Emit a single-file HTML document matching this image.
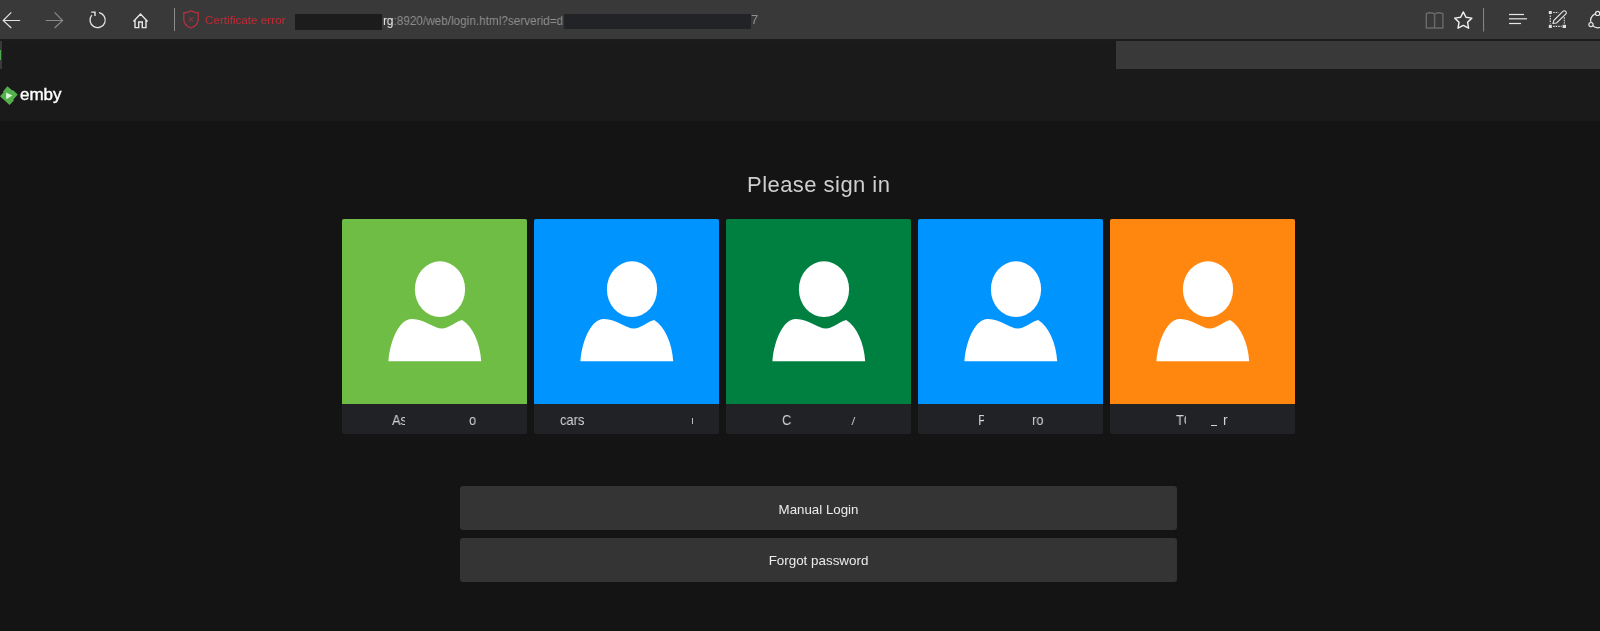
<!DOCTYPE html>
<html><head><meta charset="utf-8">
<style>
*{margin:0;padding:0;box-sizing:border-box;}
html,body{width:1600px;height:631px;overflow:hidden;background:#141414;font-family:"Liberation Sans",sans-serif;}
.abs{position:absolute;}
div{will-change:transform;}
#toolbar{left:0;top:0;width:1600px;height:39px;background:#393939;}
#tbline{left:0;top:39px;width:1600px;height:2px;background:#1c1c1c;}
#header{left:0;top:41px;width:1600px;height:80px;background:#1a1a1a;}
.tile{position:absolute;top:219px;width:185px;height:215px;border-radius:2px;overflow:hidden;background:#212226;}
.tile .img{position:absolute;left:0;top:0;width:185px;height:185px;}
.tile svg{position:absolute;left:0;top:0;}
.cap{position:absolute;color:#d2d2d2;font-size:14px;line-height:14px;white-space:nowrap;transform:scaleX(0.92);transform-origin:0 0;}
.btn{position:absolute;left:460px;width:717px;height:44px;background:#343434;border-radius:3px;color:#ececec;font-size:13px;text-align:center;}
.btn span{position:absolute;left:0;right:0;}
.redact{position:absolute;}
</style></head>
<body>
<div id="toolbar" class="abs"></div>
<div id="tbline" class="abs"></div>
<div id="header" class="abs"></div>

<!-- toolbar icons -->
<svg class="abs" style="left:0;top:0" width="1600" height="39" viewBox="0 0 1600 39">
  <g fill="none" stroke="#e2e2e2" stroke-width="1.15">
    <path d="M20.2 20.5 H3.2 M11.3 12.3 L3.2 20.5 L11.3 28"/>
  </g>
  <g fill="none" stroke="#8a8a8a" stroke-width="1.15">
    <path d="M45.8 20.5 H62.6 M54.6 12.3 L62.6 20.5 L54.6 28"/>
  </g>
  <g fill="none" stroke="#e6e6e6" stroke-width="1.3">
    <path d="M99 12.6 A7.6 7.6 0 1 1 91.8 15.2"/>
    <path d="M91.2 12.1 H95 V16" stroke-width="1.4"/>
  </g>
  <g fill="none" stroke="#e6e6e6" stroke-width="1.4">
    <path d="M133.4 21.4 L140.5 14 L147.6 21.4 M135 20.2 V27.6 H138.7 V22 H142.3 V27.6 H146 V20.2"/>
  </g>
  <line x1="174.5" y1="8" x2="174.5" y2="31" stroke="#8c8c8c" stroke-width="1"/>
  <g fill="none" stroke="#b8303b" stroke-width="1.3">
    <path d="M191 10.8 C187.5 12.8 185 13 183.8 13 V19.5 C183.8 24 187 26.5 191 28 C195 26.5 198.2 24 198.2 19.5 V13 C197 13 194.5 12.8 191 10.8 Z"/>
    <path d="M188.8 17.2 L193.2 21.6 M193.2 17.2 L188.8 21.6" stroke-width="1"/>
  </g>
  <!-- right icons -->
  <g fill="none" stroke="#6a6a6a" stroke-width="1.4">
    <path d="M1426.3 27.6 V13.6 C1429 12.4 1432.2 12.6 1434.6 14 C1437 12.6 1440.2 12.4 1442.9 13.6 V27.6 M1434.6 14 V27.6 M1425.6 28 H1443.6"/>
  </g>
  <path d="M1463.30 11.90 L1465.95 17.26 L1471.86 18.12 L1467.58 22.29 L1468.59 28.18 L1463.30 25.40 L1458.01 28.18 L1459.02 22.29 L1454.74 18.12 L1460.65 17.26 Z" fill="none" stroke="#eeeeee" stroke-width="1.45" stroke-linejoin="round"/>
  <line x1="1483.6" y1="8" x2="1483.6" y2="31.5" stroke="#8c8c8c" stroke-width="1"/>
  <g stroke="#e6e6e6" stroke-width="1.2">
    <line x1="1509" y1="14.5" x2="1524" y2="14.5"/>
    <line x1="1509" y1="18.8" x2="1527" y2="18.8"/>
    <line x1="1509" y1="23.5" x2="1521" y2="23.5"/>
  </g>
  <g fill="none" stroke="#e6e6e6" stroke-width="1.1">
    <path d="M1553.2 12.5 H1558.5 M1550.3 15.6 V23.6 M1553.2 26.4 H1561.6 M1564.3 17.2 V23.6" stroke-dasharray="1.5 1"/>
    <path d="M1553 23.3 L1553.9 20.3 L1562.9 11.4 C1563.7 10.6 1564.9 10.6 1565.7 11.4 C1566.5 12.2 1566.5 13.4 1565.7 14.2 L1556.6 23 Z"/>
  </g>
  <g fill="#e0e0e0">
    <rect x="1548.8" y="11" width="3" height="3"/>
    <rect x="1548.8" y="24.8" width="3" height="3.2"/>
    <rect x="1562.6" y="24.8" width="3.4" height="3.2"/>
  </g>
  <g fill="none" stroke="#e6e6e6" stroke-width="1.2">
    <circle cx="1597.8" cy="20.6" r="7.2"/>
  </g>
  <g fill="#393939" stroke="#e6e6e6" stroke-width="1.2">
    <circle cx="1597.6" cy="13.4" r="2.1"/>
    <circle cx="1591" cy="24.6" r="2.1"/>
  </g>
</svg>

<!-- Certificate error text -->
<div class="abs" style="left:205px;top:13px;font-size:11.7px;color:#c02a36;line-height:14px;white-space:nowrap;">Certificate error</div>
<!-- URL -->
<div class="redact" style="left:295px;top:14px;width:87px;height:16px;background:#1c1c1c;"></div>
<div class="abs" style="left:382.5px;top:12.5px;font-size:13px;color:#8f8f8f;line-height:15px;white-space:nowrap;transform:scaleX(0.905);transform-origin:0 0;"><span style="color:#f0f0f0">rg</span>:8920/web/login.html?serverid=d</div>
<div class="redact" style="left:564px;top:14px;width:187px;height:15px;background:#222326;"></div>
<div class="abs" style="left:751px;top:12px;font-size:13px;color:#8f8f8f;line-height:15px;white-space:nowrap;">7</div>

<!-- header bits -->
<div class="abs" style="left:1116px;top:41px;width:484px;height:28px;background:#393939;"></div>
<div class="abs" style="left:0;top:41px;width:2px;height:28px;background:#3a3a3a;"></div>
<div class="abs" style="left:0;top:50px;width:1px;height:10px;background:#52a852;"></div>

<!-- emby logo -->
<svg class="abs" style="left:0;top:85px" width="20" height="22" viewBox="0 0 20 22">
  <path d="M7.4 1.3 L12.4 5.6 L13.2 5.2 L17.7 9.6 L13.4 14.6 L13.9 15.5 L9.5 20.1 L0 11.2 L3.6 7.2 L3 6.4 Z" fill="#53b04c"/>
  <path d="M6.1 7.6 L12.3 10.6 L7 13.9 L6.1 13.4 Z" fill="#d8f7d2"/>
</svg>
<div class="abs" style="left:19.5px;top:85.3px;font-size:17px;color:#ffffff;line-height:20px;-webkit-text-stroke:0.4px #fff;">emby</div>

<!-- heading -->
<div class="abs" style="left:747px;top:172px;font-size:22px;letter-spacing:0.46px;color:#cfcfcf;line-height:26px;white-space:nowrap;">Please sign in</div>

<!-- tiles -->
<div class="tile" style="left:342px"><div class="img" style="background:#6fbd45"></div>
<svg width="185" height="185" viewBox="0 0 185 185"><g fill="#fff"><ellipse cx="98" cy="70.2" rx="25.1" ry="27.9"/><path d="M46.4 142.3 C48.3 120 58 100 69.4 100 C82 99.5 92 110 100.7 109.5 C108 109 114 102 120.2 101 C131 108 138 124 139.2 142.3 Z"/></g></svg></div>
<div class="tile" style="left:534px"><div class="img" style="background:#0094ff"></div>
<svg width="185" height="185" viewBox="0 0 185 185"><g fill="#fff"><ellipse cx="98" cy="70.2" rx="25.1" ry="27.9"/><path d="M46.4 142.3 C48.3 120 58 100 69.4 100 C82 99.5 92 110 100.7 109.5 C108 109 114 102 120.2 101 C131 108 138 124 139.2 142.3 Z"/></g></svg></div>
<div class="tile" style="left:726px"><div class="img" style="background:#008040"></div>
<svg width="185" height="185" viewBox="0 0 185 185"><g fill="#fff"><ellipse cx="98" cy="70.2" rx="25.1" ry="27.9"/><path d="M46.4 142.3 C48.3 120 58 100 69.4 100 C82 99.5 92 110 100.7 109.5 C108 109 114 102 120.2 101 C131 108 138 124 139.2 142.3 Z"/></g></svg></div>
<div class="tile" style="left:918px"><div class="img" style="background:#0094ff"></div>
<svg width="185" height="185" viewBox="0 0 185 185"><g fill="#fff"><ellipse cx="98" cy="70.2" rx="25.1" ry="27.9"/><path d="M46.4 142.3 C48.3 120 58 100 69.4 100 C82 99.5 92 110 100.7 109.5 C108 109 114 102 120.2 101 C131 108 138 124 139.2 142.3 Z"/></g></svg></div>
<div class="tile" style="left:1110px"><div class="img" style="background:#ff870f"></div>
<svg width="185" height="185" viewBox="0 0 185 185"><g fill="#fff"><ellipse cx="98" cy="70.2" rx="25.1" ry="27.9"/><path d="M46.4 142.3 C48.3 120 58 100 69.4 100 C82 99.5 92 110 100.7 109.5 C108 109 114 102 120.2 101 C131 108 138 124 139.2 142.3 Z"/></g></svg></div>

<!-- captions -->
<div class="cap" style="left:392px;top:412.6px;width:13.8px;overflow:hidden;">As</div>
<div class="cap" style="left:469px;top:412.6px;">o</div>
<div class="cap" style="left:559.5px;top:412.6px;">cars</div>
<div class="abs" style="left:691.5px;top:418px;width:1.3px;height:6px;background:#bdbdbd;"></div>
<div class="cap" style="left:781.5px;top:412.6px;">C</div>
<div class="abs" style="left:853px;top:417px;width:1.2px;height:7.5px;background:#c8c8c8;transform:skewX(-20deg);"></div>
<div class="cap" style="left:978px;top:412.6px;width:6.5px;overflow:hidden;">P</div>
<div class="cap" style="left:1031.5px;top:412.6px;">ro</div>
<div class="cap" style="left:1175.5px;top:412.6px;width:11.4px;overflow:hidden;">TC</div>
<div class="abs" style="left:1210.5px;top:425px;width:5.5px;height:1.3px;background:#d0d0d0;"></div>
<div class="cap" style="left:1223px;top:412.6px;">r</div>

<!-- buttons -->
<div class="btn" style="top:486px;"><span style="top:15.7px;font-size:13.3px;">Manual Login</span></div>
<div class="btn" style="top:537.5px;"><span style="top:14.6px;font-size:13.4px;">Forgot password</span></div>
</body></html>
